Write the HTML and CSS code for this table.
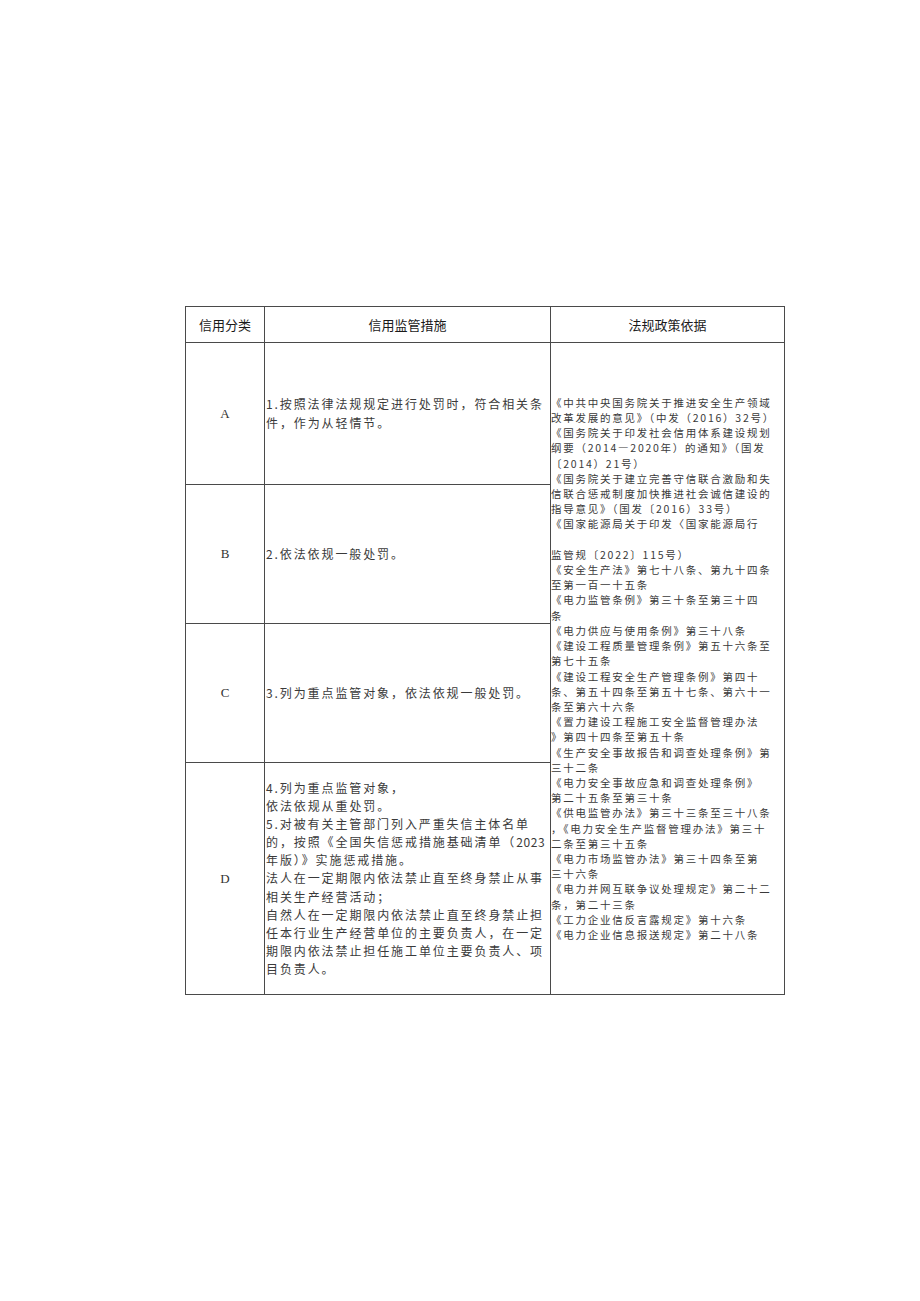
FILE: index.html
```html
<!DOCTYPE html>
<html lang="zh-CN">
<head>
<meta charset="utf-8">
<title>信用监管措施</title>
<link rel="stylesheet" href="styles.css">
</head>
<body>
<div class="page">
  <div class="sheet">
    <div class="cell head">信用分类</div>
    <div class="cell head">信用监管措施</div>
    <div class="cell head">法规政策依据</div>

    <div class="cell grade">A</div>
    <div class="cell measure">
      <span class="ln">1.按照法律法规规定进行处罚时，符合相关条</span>
      <span class="ln">件，作为从轻情节。</span>
    </div>
    <div class="cell basis">
      <span class="ln">《中共中央国务院关于推进安全生产领域</span>
      <span class="ln">改革发展的意见》（中发（2016）32号）</span>
      <span class="ln">《国务院关于印发社会信用体系建设规划</span>
      <span class="ln">纲要（2014—2020年）的通知》（国发</span>
      <span class="ln">〔2014）21号）</span>
      <span class="ln">《国务院关于建立完善守信联合激励和失</span>
      <span class="ln">信联合惩戒制度加快推进社会诚信建设的</span>
      <span class="ln">指导意见》（国发〔2016）33号）</span>
      <span class="ln">《国家能源局关于印发〈国家能源局行</span>
      <span class="ln">&nbsp;</span>
      <span class="ln">监管规〔2022〕115号）</span>
      <span class="ln">《安全生产法》第七十八条、第九十四条</span>
      <span class="ln">至第一百一十五条</span>
      <span class="ln">《电力监管条例》第三十条至第三十四</span>
      <span class="ln">条</span>
      <span class="ln">《电力供应与使用条例》第三十八条</span>
      <span class="ln">《建设工程质量管理条例》第五十六条至</span>
      <span class="ln">第七十五条</span>
      <span class="ln">《建设工程安全生产管理条例》第四十</span>
      <span class="ln">条、第五十四条至第五十七条、第六十一</span>
      <span class="ln">条至第六十六条</span>
      <span class="ln">《置力建设工程施工安全监督管理办法</span>
      <span class="ln">》第四十四条至第五十条</span>
      <span class="ln">《生产安全事故报告和调查处理条例》第</span>
      <span class="ln">三十二条</span>
      <span class="ln">《电力安全事故应急和调查处理条例》</span>
      <span class="ln">第二十五条至第三十条</span>
      <span class="ln">《供电监管办法》第三十三条至三十八条</span>
      <span class="ln">，《电力安全生产监督管理办法》第三十</span>
      <span class="ln">二条至第三十五条</span>
      <span class="ln">《电力市场监管办法》第三十四条至第</span>
      <span class="ln">三十六条</span>
      <span class="ln">《电力并网互联争议处理规定》第二十二</span>
      <span class="ln">条，第二十三条</span>
      <span class="ln">《工力企业信反言露规定》第十六条</span>
      <span class="ln">《电力企业信息报送规定》第二十八条</span>
    </div>

    <div class="cell grade">B</div>
    <div class="cell measure">
      <span class="ln">2.依法依规一般处罚。</span>
    </div>

    <div class="cell grade">C</div>
    <div class="cell measure">
      <span class="ln">3.列为重点监管对象，依法依规一般处罚。</span>
    </div>

    <div class="cell grade">D</div>
    <div class="cell measure">
      <span class="ln">4.列为重点监管对象，</span>
      <span class="ln">依法依规从重处罚。</span>
      <span class="ln">5.对被有关主管部门列入严重失信主体名单</span>
      <span class="ln">的，按照《全国失信惩戒措施基础清单（<span class="num">2023</span></span>
      <span class="ln">年版）》实施惩戒措施。</span>
      <span class="ln">法人在一定期限内依法禁止直至终身禁止从事</span>
      <span class="ln">相关生产经营活动；</span>
      <span class="ln">自然人在一定期限内依法禁止直至终身禁止担</span>
      <span class="ln">任本行业生产经营单位的主要负责人，在一定</span>
      <span class="ln">期限内依法禁止担任施工单位主要负责人、项</span>
      <span class="ln">目负责人。</span>
    </div>
  </div>
</div>
</body>
</html>
```
FILE: styles.css
```css
html, body {
  margin: 0;
  padding: 0;
  background: #ffffff;
}

.page {
  padding: 306px 0 0 185px;
  min-height: 1301px;
  box-sizing: border-box;
}

.sheet {
  display: grid;
  grid-template-columns: 79px 286px 234px;
  grid-template-rows: 36px 142px 139px 139px 232px;
  width: 600px;
  box-sizing: border-box;
  border-left: 1px solid #4a4a4a;
  border-top: 1px solid #4a4a4a;
  font-family: "Noto Sans CJK SC", "Noto Sans", sans-serif;
  color: #333333;
}

.cell {
  box-sizing: border-box;
  border-right: 1px solid #4a4a4a;
  border-bottom: 1px solid #4a4a4a;
  display: flex;
  flex-direction: column;
  justify-content: center;
  overflow: visible;
}

.head {
  align-items: center;
  font-size: 13px;
  color: #1a1a1a;
}

.grade {
  align-items: center;
  font-family: "Liberation Serif", "Noto Sans CJK SC", serif;
  font-size: 13px;
  color: #333333;
}

.measure {
  padding-left: 1px;
  font-size: 12px;
  letter-spacing: 1.9px;
  line-height: 18.1px;
  color: #3a3a3a;
}

.num {
  letter-spacing: 0.6px;
}

.basis {
  grid-column: 3;
  grid-row: 2 / 6;
  padding-left: 0;
  font-size: 10.5px;
  letter-spacing: 1.75px;
  line-height: 15.2px;
  color: #3a3a3a;
}

.ln {
  display: block;
  white-space: nowrap;
}
```
